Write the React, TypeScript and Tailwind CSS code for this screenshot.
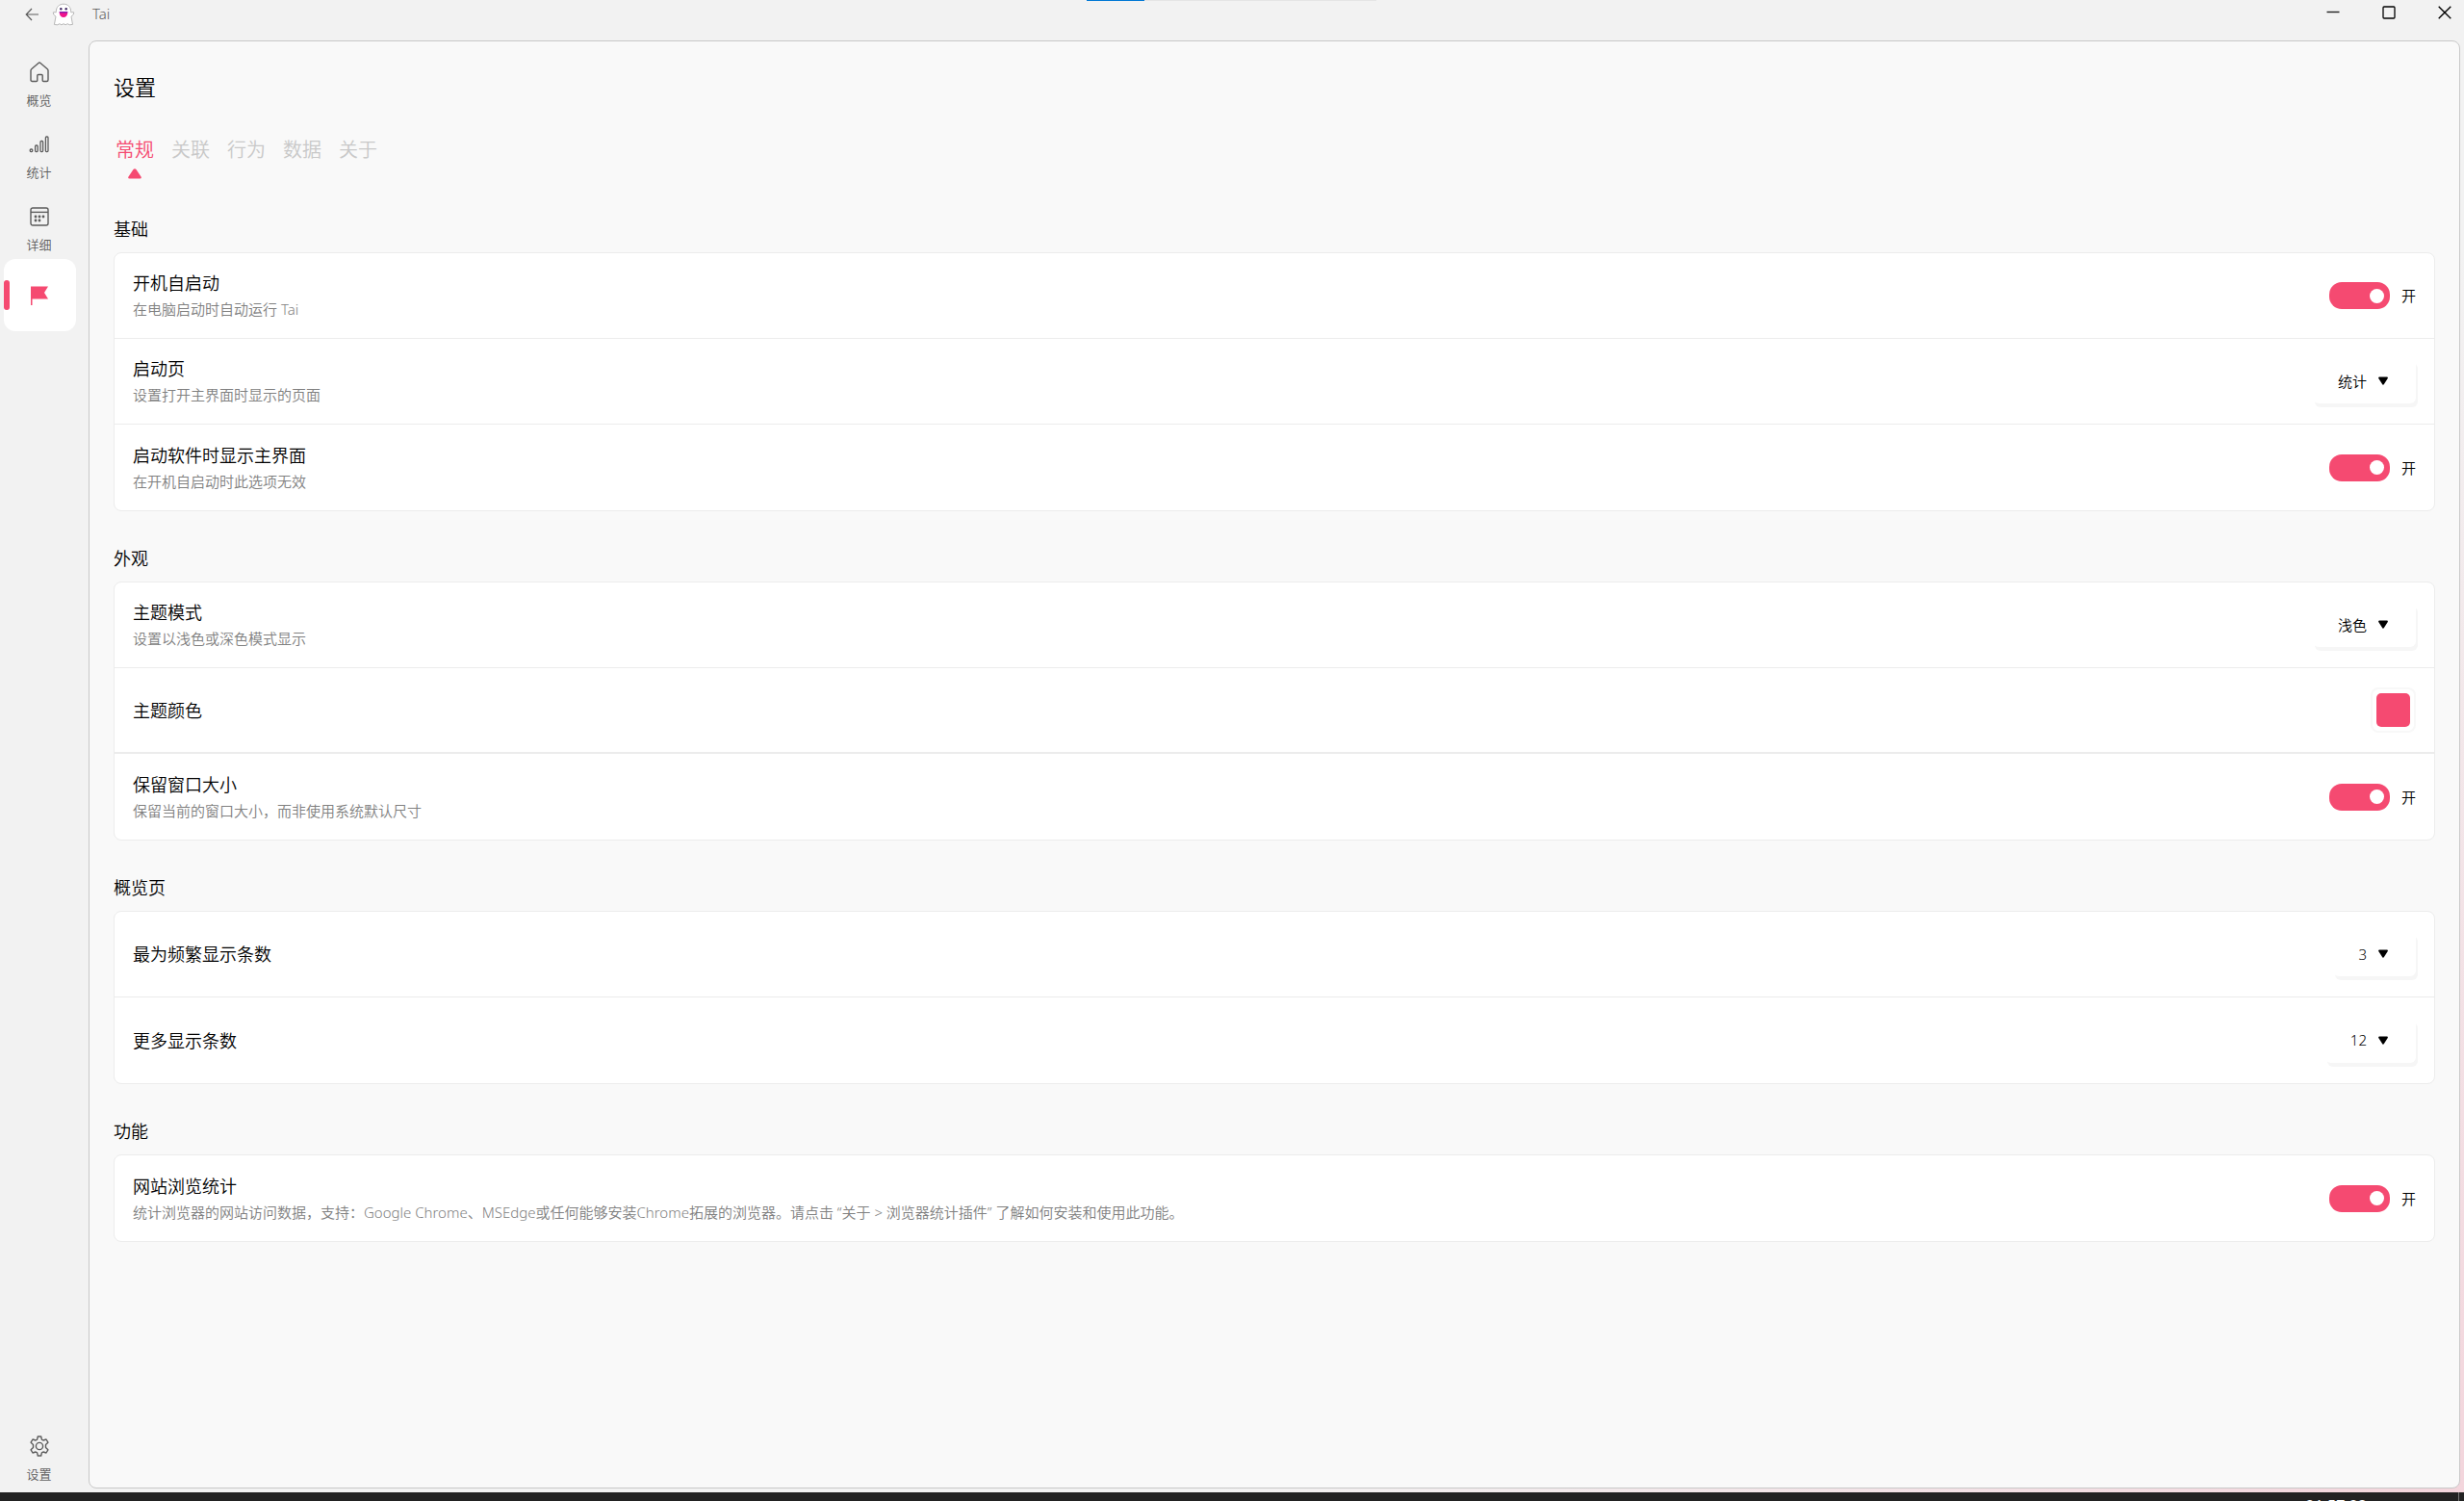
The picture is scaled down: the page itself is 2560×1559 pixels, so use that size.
import { useState } from "react";
import type { ReactNode } from "react";

const Ghost = () => (
  <svg width="24" height="24" viewBox="0 0 24 24" aria-hidden="true">
    <path
      d="M12 1.200c-4.600 0-7.600 3.200-7.600 7.300v1.200L1.300 9.800l.3 2.200 2.400 2.200-1.600 8.300 3.400.3 2-1.100 2.100 1.100 2.100-1.100 2.100 1.100 2.100-1.100 2 1.100 3.300-.4-1.500-8.200 2.400-2.200.3-2.200-3.100-.1V8.500c0-4.100-3-7.300-7.600-7.300z"
      fill="#fff"
      stroke="#b8b8b8"
      strokeWidth="1"
      strokeLinejoin="round"
    />
    <circle cx="9.300" cy="6.300" r="1.200" fill="#3d2460" />
    <circle cx="14.700" cy="6.300" r="1.200" fill="#3d2460" />
    <path d="M7.800 9h8.400v1.700a4.200 4.200 0 0 1-8.400 0z" fill="#f0148c" />
    <path d="M7.800 9h8.400v1.500H7.800z" fill="#8a1fae" />
  </svg>
);

const HomeIcon = () => (
  <svg width="20" height="22" viewBox="0 0 20 22" fill="none" stroke="#5c5c5c" strokeWidth="1.400" strokeLinejoin="round" aria-hidden="true">
    <path d="M1 9.300c0-.6.2-1.100.7-1.500l7.300-6.300c.6-.5 1.400-.5 2 0l7.300 6.300c.4.4.7.9.7 1.500v9.700c0 .9-.6 1.500-1.500 1.500h-3.300c-.6 0-1-.4-1-1v-5c0-.6-.4-1-1-1H8.800c-.6 0-1 .4-1 1v5c0 .6-.4 1-1 1H2.500C1.600 20.500 1 19.900 1 19z" />
  </svg>
);

const StatsIcon = () => (
  <svg width="22" height="18" viewBox="0 0 22 18" fill="none" stroke="#5c5c5c" strokeWidth="1.300" aria-hidden="true">
    <rect x="1.200" y="14" width="2.600" height="2.600" rx="1" />
    <rect x="6.600" y="10" width="2.600" height="6.600" rx="1" />
    <rect x="12" y="5.500" width="2.600" height="11.100" rx="1" />
    <rect x="17.400" y="1" width="2.600" height="15.600" rx="1" />
  </svg>
);

const CalendarIcon = () => (
  <svg width="20" height="20" viewBox="0 0 20 20" fill="none" stroke="#5c5c5c" strokeWidth="1.400" aria-hidden="true">
    <rect x="1" y="1" width="18" height="18" rx="2" />
    <path d="M1 5.400h18" />
    <g fill="#5c5c5c" stroke="none">
      <circle cx="6" cy="10" r="1.400" />
      <circle cx="10" cy="10" r="1.400" />
      <circle cx="14" cy="10" r="1.400" />
      <circle cx="6" cy="14" r="1.400" />
      <circle cx="10" cy="14" r="1.400" />
    </g>
  </svg>
);

const FlagIcon = () => (
  <svg width="20" height="22" viewBox="0 0 20 22" aria-hidden="true">
    <path d="M1 1.500h18l-4 6.500 4 6.500H2.500V21H1z" fill="#f54a71" />
  </svg>
);

const GearIcon = () => (
  <svg width="22" height="22" viewBox="0 0 22 22" fill="none" stroke="#5c5c5c" strokeWidth="1.400" strokeLinejoin="round" aria-hidden="true">
    <path d="M9.300 1h3.400l.7 3.100 1.500.9 3.100-1 1.900 3.200-2.400 2.200v3.200l2.400 2.200-1.900 3.200-3.100-1-1.500.9-.7 3.100H9.300l-.7-3.100-1.500-.9-3.100 1-1.900-3.200 2.400-2.200V9.400L2.100 7.200 4 4l3.100 1 1.500-.9z" />
    <circle cx="11" cy="11" r="3.600" />
  </svg>
);

interface NavButtonProps {
  icon: ReactNode;
  label: string;
}

const NavButton = ({ icon, label }: NavButtonProps) => (
  <button className="flex h-[75px] w-[75px] flex-col items-center pt-5 pr-[2px]">
    <span className="flex h-[22px] items-center">{icon}</span>
    <span className="mt-2 text-[13px] leading-5 text-[#5c5c5c]">{label}</span>
  </button>
);

const Toggle = ({ label }: { label: string }) => {
  const [on, setOn] = useState(true);

  return (
    <label className="flex items-center gap-3 text-[15px] leading-6">
      <input
        type="checkbox"
        aria-label={label}
        checked={on}
        onChange={() => setOn(!on)}
        className="flex h-7 w-[63px] appearance-none items-center rounded-[13px] bg-[#c8c8c8] px-[6px] before:h-[15px] before:w-[15px] before:rounded-full before:bg-white checked:justify-end checked:bg-[#f54a71]"
      />
      <span>{on ? "开" : "关"}</span>
    </label>
  );
};

interface DropdownProps {
  label: string;
  value: string;
  options: string[];
}

const Dropdown = ({ label, value, options }: DropdownProps) => (
  <div className="relative flex items-center">
    <select
      aria-label={label}
      defaultValue={value}
      className="field-sizing-content h-[46px] appearance-none rounded-md bg-white pr-[51px] pl-[26px] text-[15px] shadow-[2px_4px_0_#f6f6f6]"
    >
      {options.map((option) => (
        <option key={option}>{option}</option>
      ))}
    </select>
    <svg className="pointer-events-none absolute right-[28px]" width="12" height="10" viewBox="0 0 12 10" aria-hidden="true">
      <path d="M2 1.500h8L6 7.800z" stroke="#000" strokeWidth="1.800" strokeLinejoin="round" />
    </svg>
  </div>
);

interface RowProps {
  title: string;
  desc?: string;
  border?: string;
  children: ReactNode;
}

const Row = ({ title, desc, border = "border-b", children }: RowProps) => (
  <div className={`flex h-[89px] items-center justify-between border-[#ececec] pr-[19px] pl-[19px] last:border-b-0 ${border}`}>
    <div>
      <h3 className="text-lg leading-6">{title}</h3>
      {desc && <p className="mt-1 text-[15px] leading-[22px] text-[#808080]">{desc}</p>}
    </div>
    {children}
  </div>
);

const Section = ({ title, children }: { title: string; children: ReactNode }) => (
  <section className="mt-[37px]">
    <h2 className="mb-3 text-lg leading-6">{title}</h2>
    <div className="rounded-lg border border-[#ececec] bg-white">{children}</div>
  </section>
);

const tabs = ["常规", "关联", "行为", "数据", "关于"];

const App: React.FC = () => {
  const [tab, setTab] = useState("常规");

  return (
    <div className="flex h-screen flex-col overflow-hidden bg-[#f2f2f2] bg-[radial-gradient(circle_1300px_at_bottom_right,#f3d5dc,#f2f2f2)] font-['Noto_Sans','Noto_Sans_CJK_SC',sans-serif] font-[350] text-black">
      {/* Title bar */}
      <header className="relative flex h-[42px] shrink-0 items-start justify-between">
        <div className="flex h-[29px] items-center pl-[26px]">
          <button aria-label="返回">
            <svg width="15" height="14" viewBox="0 0 15 14" fill="none" stroke="#5c5c5c" strokeWidth="1.200" aria-hidden="true">
              <path d="M14 7H1.500M7 1L1.200 7 7 13" />
            </svg>
          </button>
          <span className="ml-[13px]">
            <Ghost />
          </span>
          <h1 className="ml-[18px] text-[15px] text-[#5c5c5c]">Tai</h1>
        </div>

        {/* Loading bar */}
        <div className="absolute top-0 left-[44.1%] h-px w-[301px] bg-[#e5e5e5]">
          <div className="h-px w-[60px] bg-[#0078d4]" />
        </div>

        <div className="flex h-[25px] items-center gap-[18px]">
          <button aria-label="最小化" className="flex w-10 justify-center">
            <svg width="14" height="14" viewBox="0 0 14 14" aria-hidden="true">
              <path d="M.5 6.500h13" stroke="#222" strokeWidth="1.400" />
            </svg>
          </button>
          <button aria-label="最大化" className="flex w-10 justify-center">
            <svg width="14" height="14" viewBox="0 0 14 14" fill="none" aria-hidden="true">
              <rect x="1" y="1" width="12" height="12" rx="1" stroke="#000" strokeWidth="1.300" />
            </svg>
          </button>
          <button aria-label="关闭" className="flex w-10 justify-center">
            <svg width="14" height="14" viewBox="0 0 14 14" aria-hidden="true">
              <path d="M.7.7l12.600 12.600M13.300.7L.7 13.300" stroke="#000" strokeWidth="1.300" />
            </svg>
          </button>
        </div>
      </header>

      <div className="flex min-h-0 flex-1 pr-1 pb-1">
        {/* Sidebar */}
        <nav className="flex w-[92px] shrink-0 flex-col pt-[2px] pl-1">
          <NavButton icon={<HomeIcon />} label="概览" />
          <NavButton icon={<StatsIcon />} label="统计" />
          <NavButton icon={<CalendarIcon />} label="详细" />
          <button aria-label="标记" className="flex h-[75px] w-[75px] items-center rounded-xl bg-white">
            <span className="h-[31px] w-[6px] rounded-[3px] bg-[#f54a71]" />
            <span className="ml-[21px]">
              <FlagIcon />
            </span>
          </button>
          <div className="mt-auto">
            <NavButton icon={<GearIcon />} label="设置" />
          </div>
        </nav>

        <main className="min-w-0 flex-1 overflow-hidden rounded-lg border border-[#c8c8c8] bg-[#f9f9f9] px-[25px] pt-[31px]">
          <h1 className="text-[22px] leading-8">设置</h1>

          {/* Tabs */}
          <div role="tablist" className="mt-[35px] flex h-12 items-start gap-[18px] pl-[2px]">
            {tabs.map((name) => (
              <button
                key={name}
                role="tab"
                aria-selected={tab === name}
                onClick={() => setTab(name)}
                className={`flex flex-col items-center text-xl leading-[30px] ${tab === name ? "text-[#f54a71]" : "text-[#c8c8c8]"}`}
              >
                {name}
                {tab === name && (
                  <svg className="mt-1" width="14" height="11" viewBox="0 0 14 11" fill="#f54a71" aria-hidden="true">
                    <path d="M5.500 1q1.500-1.500 3 0l5 7.500q1 2-1 2h-11q-2 0-1-2z" />
                  </svg>
                )}
              </button>
            ))}
          </div>

          <Section title="基础">
            <Row title="开机自启动" desc="在电脑启动时自动运行 Tai">
              <Toggle label="开机自启动" />
            </Row>
            <Row title="启动页" desc="设置打开主界面时显示的页面">
              <Dropdown label="启动页" value="统计" options={["概览", "统计", "详细"]} />
            </Row>
            <Row title="启动软件时显示主界面" desc="在开机自启动时此选项无效">
              <Toggle label="启动软件时显示主界面" />
            </Row>
          </Section>

          <Section title="外观">
            <Row title="主题模式" desc="设置以浅色或深色模式显示">
              <Dropdown label="主题模式" value="浅色" options={["浅色", "深色"]} />
            </Row>
            <Row title="主题颜色" border="border-b-2">
              <button aria-label="主题颜色" className="rounded-lg border-2 border-[#f8f8f8] p-1">
                <span className="block h-[35px] w-[35px] rounded-[5px] bg-[#f54a71]" />
              </button>
            </Row>
            <Row title="保留窗口大小" desc="保留当前的窗口大小，而非使用系统默认尺寸">
              <Toggle label="保留窗口大小" />
            </Row>
          </Section>

          <Section title="概览页">
            <Row title="最为频繁显示条数">
              <Dropdown label="最为频繁显示条数" value="3" options={["3", "4", "5"]} />
            </Row>
            <Row title="更多显示条数">
              <Dropdown label="更多显示条数" value="12" options={["8", "12", "16"]} />
            </Row>
          </Section>

          <Section title="功能">
            <Row
              title="网站浏览统计"
              desc="统计浏览器的网站访问数据，支持：Google Chrome、MSEdge或任何能够安装Chrome拓展的浏览器。请点击 “关于 > 浏览器统计插件” 了解如何安装和使用此功能。"
            >
              <Toggle label="网站浏览统计" />
            </Row>
          </Section>
        </main>
      </div>

      {/* Taskbar edge */}
      <footer className="flex h-[9px] shrink-0 items-start justify-end gap-[95px] overflow-hidden bg-[#222] pr-[5px] text-base leading-6 font-normal text-white">
        <time className="pt-[2px]">21:57:23</time>
        <span className="h-full w-px bg-[#777]" />
      </footer>
    </div>
  );
};

export default App;
